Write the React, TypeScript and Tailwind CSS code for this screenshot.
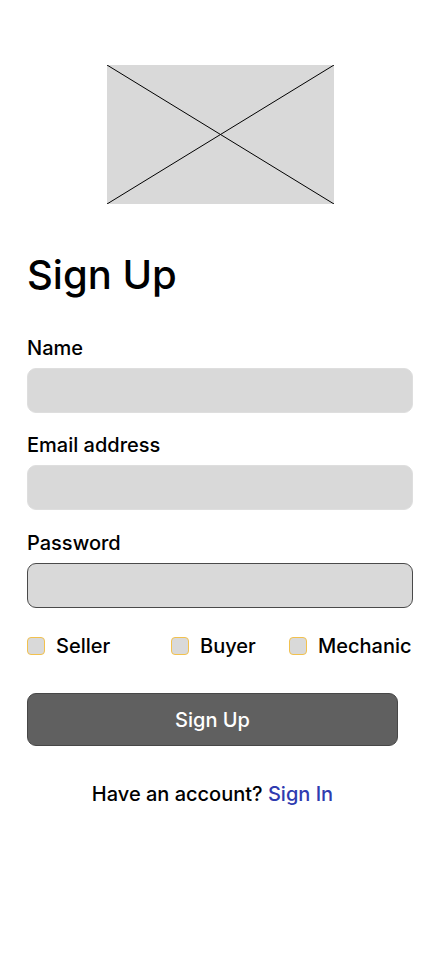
import React from 'react';

const font = { fontFamily: 'Inter, "Noto Sans", sans-serif' };

interface FieldProps {
    label: string;
    type?: string;
    outlined?: boolean;
    className?: string;
}

const Field: React.FC<FieldProps> = ({ label, type = 'text', outlined, className }) => (
    <div className={'flex flex-col gap-2 ' + (className ?? '')}>
        <label className="text-[20px] leading-6 font-medium text-black">{label}</label>
        <input
            type={type}
            className={
                'h-[45px] w-full rounded-[9px] bg-[#d9d9d9] outline-none border ' +
                (outlined ? 'border-[#4a4a4a]' : 'border-[#dedede]')
            }
        />
    </div>
);

const RoleCheck: React.FC<{ label: string; className?: string }> = ({ label, className }) => (
    <label className={'flex items-center gap-[11px] ' + (className ?? '')}>
        <span className="block w-[18px] h-[18px] rounded-[4px] bg-[#d9d9d9] border border-[#f2c14e]" />
        <span className="text-[20px] leading-6 font-medium text-black">{label}</span>
    </label>
);

const App: React.FC = () => {
    return (
        <div className="min-h-[956px] w-[440px] bg-white px-[27px]" style={font}>
            <div className="pt-[65px] pl-[80px]">
                <svg width="227" height="139" viewBox="0 0 227 139" className="block">
                    <rect x="0" y="0" width="227" height="139" fill="#d9d9d9" />
                    <line x1="0" y1="0" x2="227" y2="139" stroke="#000" strokeWidth="1" />
                    <line x1="227" y1="0" x2="0" y2="139" stroke="#000" strokeWidth="1" />
                </svg>
            </div>

            <h1 className="mt-[47px] text-[40px] leading-[48px] font-medium text-black">Sign Up</h1>

            <form className="mt-[37px] flex flex-col gap-5" onSubmit={(e) => e.preventDefault()}>
                <Field label="Name" />
                <Field label="Email address" type="email" />
                <Field label="Password" type="password" outlined className="pt-px" />
            </form>

            <div className="mt-[26px] flex">
                <RoleCheck label="Seller" className="w-[144px]" />
                <RoleCheck label="Buyer" className="w-[118px]" />
                <RoleCheck label="Mechanic" />
            </div>

            <button className="mt-[35px] w-[371px] h-[53px] rounded-[9px] bg-[#606060] border border-[#474747] text-white text-[20px] font-medium">
                Sign Up
            </button>

            <p className="mt-9 w-[371px] text-center text-[20px] leading-6 font-medium text-black">
                Have an account? <a className="text-[#2f3bb0]">Sign In</a>
            </p>
        </div>
    );
};

export default App;
